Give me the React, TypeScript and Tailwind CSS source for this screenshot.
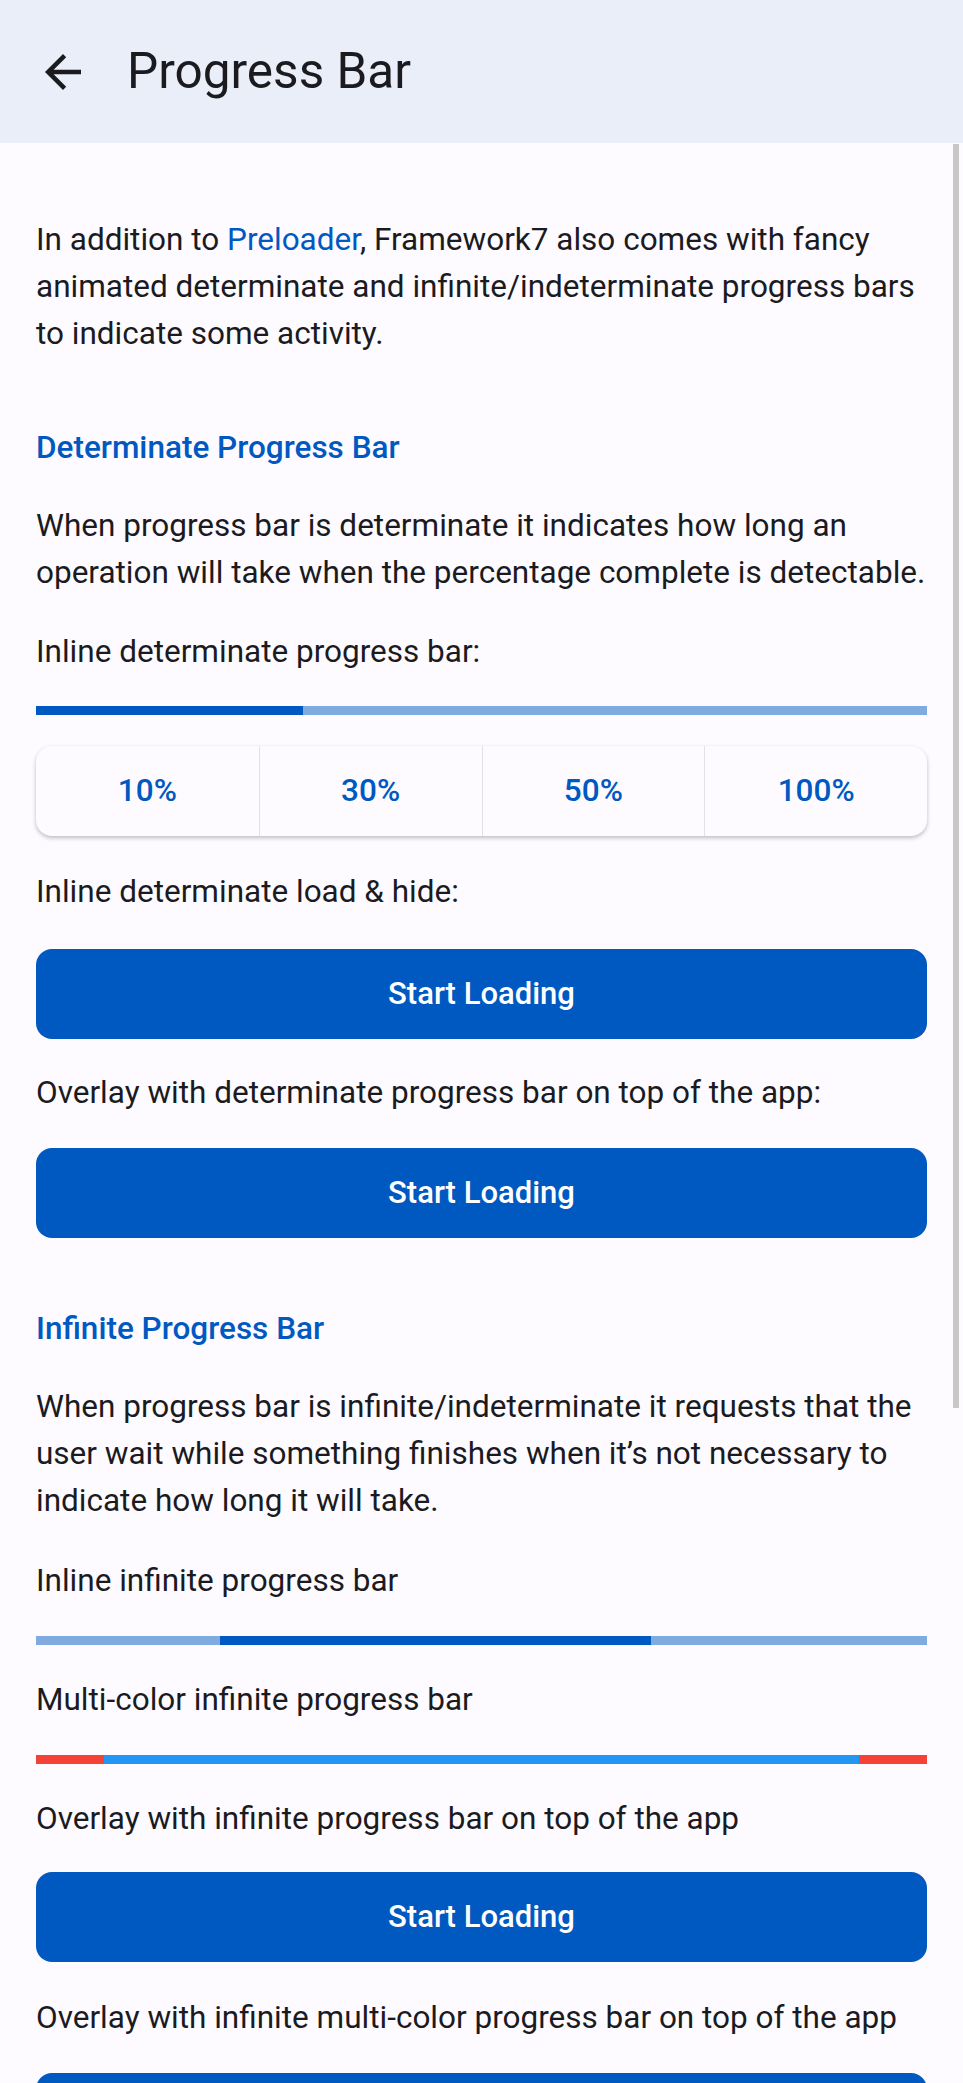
import React from 'react';

const Text: React.FC<{ children: React.ReactNode; className?: string }> = ({ children, className = '' }) => (
  <p className={`text-[31.5px] leading-[47px] text-[#1b1b1f] ${className}`}>{children}</p>
);

const BlockTitle: React.FC<{ children: React.ReactNode }> = ({ children }) => (
  <h2 className="text-[31.5px] leading-[47px] font-medium text-[#0059c1] mt-[67px]">{children}</h2>
);

const LoadButton: React.FC<{ className?: string }> = ({ className = 'mt-[32px]' }) => (
  <button className={`${className} w-full h-[90px] rounded-[16px] bg-[#0059c1] text-white text-[31px] font-medium`}>
    Start Loading
  </button>
);

export default function App() {
  const percents = ['10%', '30%', '50%', '100%'];

  return (
    <div className="relative min-h-[2083px] bg-[#fdfbff] font-['Roboto',sans-serif]">
      {/* Navbar */}
      <div className="h-[143px] bg-[#e9eef9] flex items-center pl-[36px]">
        <svg width="54" height="54" viewBox="0 0 24 24" className="text-[#1b1b1f]">
          <path fill="currentColor" d="M20 11H7.83l5.59-5.59L12 4l-8 8 8 8 1.41-1.41L7.83 13H20v-2z" />
        </svg>
        <h1 className="ml-[37px] text-[49.5px] text-[#1b1b1f]">Progress Bar</h1>
      </div>

      <div className="px-[36px] pb-[40px]">
        <Text className="mt-[73px]">
          In addition to <span className="text-[#0059c1]">Preloader</span>, Framework7 also comes with fancy
          animated determinate and infinite/indeterminate progress bars to indicate some activity.
        </Text>

        <BlockTitle>Determinate Progress Bar</BlockTitle>
        <Text className="mt-[31px]">
          When progress bar is determinate it indicates how long an operation will take when the percentage
          complete is detectable.
        </Text>

        <Text className="mt-[32px]">Inline determinate progress bar:</Text>
        <div className="mt-[31px] h-[9px] bg-[#80abe0]">
          <div className="h-full w-[30%] bg-[#0059c1]" />
        </div>

        <div className="mt-[31px] h-[90px] grid grid-cols-4 rounded-[16px] bg-[#fdfbff] shadow-[0_2px_4px_rgba(0,0,0,0.25)] overflow-hidden">
          {percents.map((p, i) => (
            <button
              key={p}
              className={`text-[31.5px] font-medium text-[#0059c1] ${i > 0 ? 'border-l border-[#e2e2e6]' : ''}`}
            >
              {p}
            </button>
          ))}
        </div>

        <Text className="mt-[32px]">Inline determinate load &amp; hide:</Text>
        <LoadButton className="mt-[34px]" />

        <Text className="mt-[30px]">Overlay with determinate progress bar on top of the app:</Text>
        <LoadButton />

        <BlockTitle>Infinite Progress Bar</BlockTitle>
        <Text className="mt-[31px]">
          When progress bar is infinite/indeterminate it requests that the user wait while something finishes
          when it’s not necessary to indicate how long it will take.
        </Text>

        <Text className="mt-[33px]">Inline infinite progress bar</Text>
        <div className="mt-[32px] h-[9px] flex bg-[#80abe0]">
          <div className="w-[184px]" />
          <div className="w-[431px] bg-[#0059c1]" />
        </div>

        <Text className="mt-[31px]">Multi-color infinite progress bar</Text>
        <div className="mt-[32px] h-[9px] flex">
          <div className="w-[68px] bg-[#f44336]" />
          <div className="flex-1 bg-[#2196f3]" />
          <div className="w-[68px] bg-[#f44336]" />
        </div>

        <Text className="mt-[31px]">Overlay with infinite progress bar on top of the app</Text>
        <LoadButton className="mt-[30px]" />

        <Text className="mt-[32px]">Overlay with infinite multi-color progress bar on top of the app</Text>
        <LoadButton />
      </div>

      {/* scroll indicator */}
      <div className="absolute top-[144px] right-[4px] w-[6px] h-[1264px] bg-[#c8c8c8]" />
    </div>
  );
}
